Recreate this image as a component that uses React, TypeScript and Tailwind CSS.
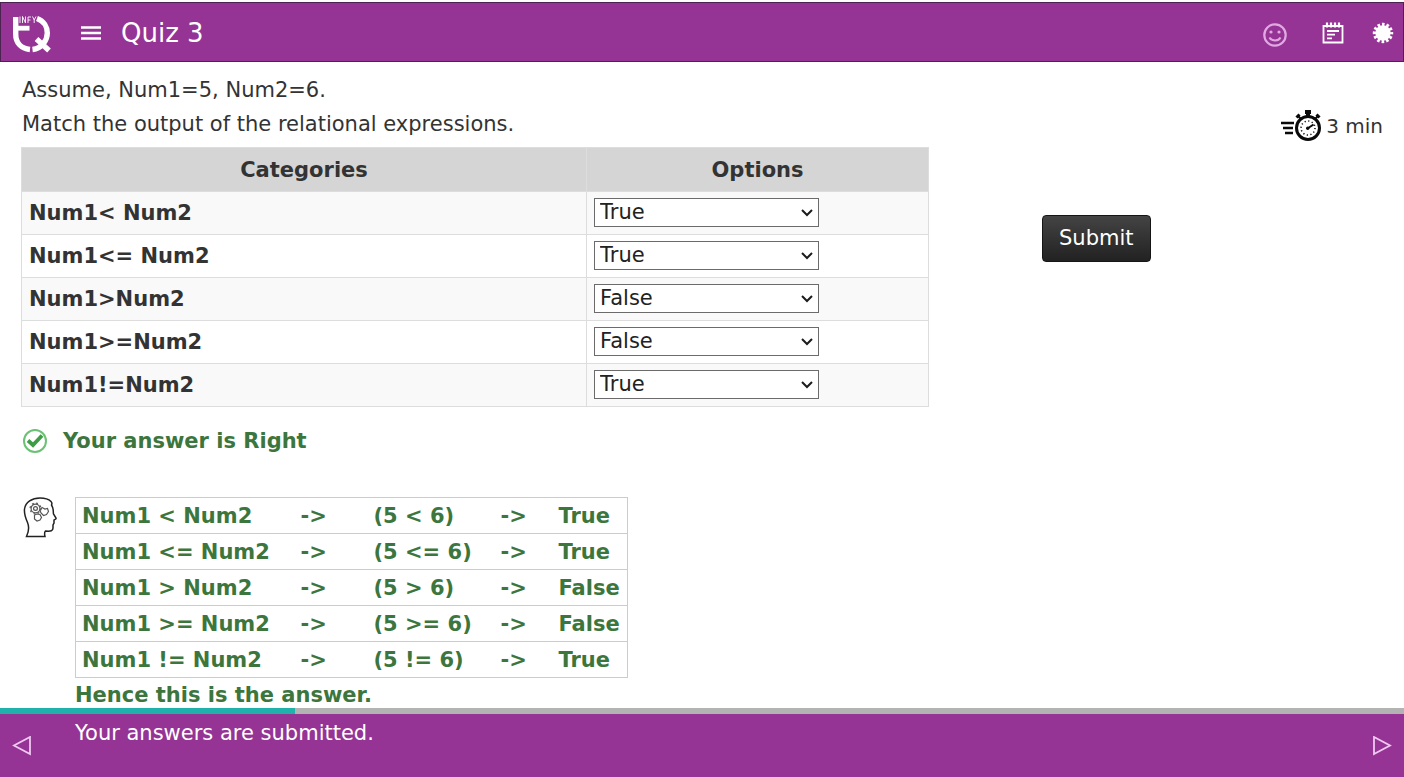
import { useState } from "react";

const rows = [
  { label: "Num1< Num2", value: "True" },
  { label: "Num1<= Num2", value: "True" },
  { label: "Num1>Num2", value: "False" },
  { label: "Num1>=Num2", value: "False" },
  { label: "Num1!=Num2", value: "True" },
];

const explanation = [
  ["Num1 < Num2", "(5 < 6)", "True"],
  ["Num1 <= Num2", "(5 <= 6)", "True"],
  ["Num1 > Num2", "(5 > 6)", "False"],
  ["Num1 >= Num2", "(5 >= 6)", "False"],
  ["Num1 != Num2", "(5 != 6)", "True"],
];

function Logo() {
  return (
    <svg width="40" height="42" viewBox="0 0 40 42" fill="none" stroke="#fff" aria-label="Infy TQ" role="img">
      <path d="M3.700 5V22C3.700 31 9 36.500 18 37.500" strokeWidth="5.400" />
      <path d="M1 16.200H17.500" strokeWidth="4.800" />
      <path d="M25 6.500C32 9 35.300 15 35.300 21C35.300 28 30 36.500 20.500 37.500" strokeWidth="5.400" />
      <path d="M24.500 27L37 38.500" strokeWidth="5.400" />
      <path d="M8 4.500V11M10.500 11V4.500L13.500 11V4.500M19 5H16V11M16 8H18.500M20.500 4.500L22.200 8L24 4.500M22.200 8V11" strokeWidth="0.900" />
    </svg>
  );
}

function MenuLines() {
  return (
    <svg width="20" height="14" viewBox="0 0 20 14" stroke="#fff" strokeWidth="2.400">
      <path d="M0 1.500H20M0 7H20M0 12.500H20" />
    </svg>
  );
}

function Smiley() {
  return (
    <svg width="26" height="26" viewBox="0 0 26 26" fill="none" stroke="#e2a8e4" strokeWidth="2.200">
      <circle cx="13" cy="13" r="10.700" />
      <path d="M7.500 15.500C9.500 19.500 16.500 19.500 18.500 15.500" strokeWidth="2" />
      <g fill="#e2a8e4" stroke="none">
        <circle cx="9" cy="10" r="1.600" />
        <circle cx="17" cy="10" r="1.600" />
      </g>
    </svg>
  );
}

function Notes() {
  return (
    <svg width="22" height="22" viewBox="0 0 22 22" fill="none" stroke="#fff" strokeWidth="1.800">
      <path d="M1.500 4H20.500V20.500H1.500Z" />
      <path d="M5 0.500V5.500M9 0.500V5.500M13 0.500V5.500M17 0.500V5.500" strokeWidth="2.200" />
      <path d="M5 9H17M5 12.700H13M5 16.400H10" />
    </svg>
  );
}

function Badge() {
  return (
    <svg width="22" height="22" viewBox="0 0 22 22">
      <circle cx="11" cy="11" r="7.700" fill="#fff" />
      <circle cx="11" cy="11" r="8.600" fill="none" stroke="#fff" strokeWidth="3.200" strokeDasharray="2.600 1.903" strokeDashoffset="1.300" />
    </svg>
  );
}

function Stopwatch() {
  return (
    <svg width="40" height="32" viewBox="0 0 40 32" fill="none" stroke="#0a0a0a">
      <circle cx="27" cy="18" r="11.500" strokeWidth="3" />
      <path d="M24 2H30M27 2V6" strokeWidth="4" />
      <path d="M15.500 7.500L18.500 4.500M35.500 4.500L38.500 7.500" strokeWidth="3" />
      <path d="M17 6L19.500 8.500M37 6L34.500 8.500" strokeWidth="2" />
      <circle cx="27" cy="18" r="7" strokeWidth="1.500" strokeDasharray="1.200 2.465" />
      <path d="M26.500 18.500L32.500 14.500" strokeWidth="2" />
      <circle cx="26.700" cy="18.300" r="1.700" fill="#0a0a0a" stroke="none" />
      <path d="M0 13H13M2 18H12M4 23H12" strokeWidth="2.400" />
    </svg>
  );
}

function RightMark() {
  return (
    <svg width="26" height="26" viewBox="0 0 26 26" fill="none">
      <circle cx="13" cy="13" r="11" stroke="#6cc174" strokeWidth="2" />
      <path d="M6 12.500L11 17L20 7.500" stroke="#3f9c46" strokeWidth="3.800" />
    </svg>
  );
}

function ThinkingHead() {
  return (
    <svg width="34" height="41" viewBox="0 0 34 41" fill="none" stroke="#222" strokeWidth="1.500">
      <path d="M3.500 39.500C6 34 6.500 30 4.500 25.500C2 20 1 17 1.500 12C2.500 5 9 1 17 1C22 1 26 2.500 28 4.500C29.500 6 29 7 28.500 8C31 12 30 15 30.500 17L33 21C33.500 22.500 31.500 22.500 31 23L31 26L30 28L30 31C30 34 28 34.500 22.500 34C21 35.500 21.500 37 22 39.500Z" />
      <g stroke="#555" strokeWidth="1.200">
        <circle cx="12.500" cy="11.500" r="4.400" />
        <circle cx="12.500" cy="11.500" r="5.400" strokeDasharray="1.800 2.441" />
        <circle cx="12.500" cy="11.500" r="1.900" />
        <path d="M19 10.500L22 12L24.500 11.500L25.500 14.500L23.500 17.500L20.500 18.500L18 16L17 13.500Z" />
        <path d="M11.500 18L14 17L17 17.500L18.500 20.500L17 23L14 24L11.500 22Z" />
      </g>
    </svg>
  );
}

export default function App() {
  const [answers, setAnswers] = useState(rows.map((r) => r.value));

  return (
    <div className="flex min-h-screen flex-col bg-white pt-[2px] font-['Verdana','DejaVu_Sans',sans-serif] text-[21px] text-[#333]">
      <header className="flex h-[60px] items-center border border-[#4b2350] bg-[#953494] pt-[2px] pr-[9px] pl-[11px] text-white">
        <Logo />
        <button type="button" aria-label="Menu" className="ml-[29px]">
          <MenuLines />
        </button>
        <h1 className="ml-5 text-[26px]">Quiz 3</h1>
        <div className="ml-auto flex items-center">
          <button type="button" aria-label="Feedback" className="mt-1">
            <Smiley />
          </button>
          <button type="button" aria-label="Notes" className="ml-[34px]">
            <Notes />
          </button>
          <button type="button" aria-label="Achievements" className="ml-7">
            <Badge />
          </button>
        </div>
      </header>

      <main className="flex flex-1 items-start px-[21px] pt-[11px]">
        <div className="w-2/3">
          <div className="pl-px leading-[34px]">
            <p>Assume, Num1=5, Num2=6.</p>
            <p>Match the output of the relational expressions.</p>
          </div>

          <table className="mt-[6px] w-full table-fixed border-collapse border border-[#ddd]">
            <thead>
              <tr className="h-11 bg-[#d5d5d5]">
                <th className="w-[62.3%] border border-[#ddd] pt-[2px]">Categories</th>
                <th className="border border-[#ddd] pt-[2px]">Options</th>
              </tr>
            </thead>
            <tbody>
              {rows.map((row, i) => (
                <tr key={row.label} className="h-[43px] odd:bg-[#f9f9f9]">
                  <th scope="row" className="border border-[#ddd] px-[7px] pt-[2px] text-left">
                    <label htmlFor={`answer-${i}`}>{row.label}</label>
                  </th>
                  <td className="border border-[#ddd] px-[7px] pb-px">
                    <div className="relative w-[225px]">
                      <select
                        id={`answer-${i}`}
                        value={answers[i]}
                        onChange={(e) => setAnswers(answers.map((a, j) => (j === i ? e.target.value : a)))}
                        className="block h-[29px] w-full appearance-none border border-[#6b6b6b] bg-white pl-[5px] leading-[27px] text-[#222]"
                      >
                        <option>True</option>
                        <option>False</option>
                      </select>
                      <svg
                        width="12"
                        height="8"
                        viewBox="0 0 12 8"
                        fill="none"
                        stroke="#1c1c1c"
                        strokeWidth="2"
                        className="pointer-events-none absolute top-[11px] right-[6px]"
                      >
                        <path d="M1 1L6 6L11 1" />
                      </svg>
                    </div>
                  </td>
                </tr>
              ))}
            </tbody>
          </table>

          <div className="mt-[17px] flex items-center gap-[15px] pl-px font-bold text-[#3c763d]">
            <RightMark />
            <p className="leading-[34px]">Your answer is Right</p>
          </div>

          <div className="mt-[39px] flex items-start gap-[18px] pl-[2px] font-bold text-[#3c763d]">
            <ThinkingHead />
            <div>
              <table className="w-[553px] table-fixed border-collapse border border-[#ccc]">
                <colgroup>
                  <col className="w-[225px]" />
                  <col className="w-[73px]" />
                  <col className="w-[127px]" />
                  <col className="w-[58px]" />
                  <col />
                </colgroup>
                <tbody>
                  {explanation.map(([expression, substituted, result]) => (
                    <tr key={expression} className="h-9 border border-[#ccc]">
                      <td className="pt-[2px] pl-[6px]">{expression}</td>
                      <td className="pt-[2px]">-&gt;</td>
                      <td className="pt-[2px]">{substituted}</td>
                      <td className="pt-[2px]">-&gt;</td>
                      <td className="pt-[2px]">{result}</td>
                    </tr>
                  ))}
                </tbody>
              </table>
              <p className="pt-1 leading-[26px]">Hence this is the answer.</p>
            </div>
          </div>
        </div>

        <aside className="flex-1">
          <div className="mt-[37px] flex items-center justify-end gap-[5px]">
            <Stopwatch />
            <span className="text-[20px]">3 min</span>
          </div>
          <button
            type="button"
            className="mt-[73px] ml-[113px] h-[47px] rounded border border-[#151515] bg-linear-to-b from-[#444] to-[#222] px-4 text-white"
          >
            Submit
          </button>
        </aside>
      </main>

      <footer className="text-white">
        <div className="h-[6px] bg-[#b3b3b3]">
          <div className="h-full w-[21%] bg-[#20b2aa]" />
        </div>
        <div className="flex h-[63px] items-center bg-[#953494] px-3">
          <button type="button" aria-label="Previous">
            <svg width="20" height="20" viewBox="0 0 20 20" fill="none" stroke="#f0c8f2" strokeWidth="1.800">
              <path d="M18 1V18L2 9.500Z" />
            </svg>
          </button>
          <p className="ml-[43px] self-start pt-1 leading-[30px]">Your answers are submitted.</p>
          <button type="button" aria-label="Next" className="ml-auto">
            <svg width="20" height="20" viewBox="0 0 20 20" fill="none" stroke="#f0c8f2" strokeWidth="1.800">
              <path d="M2 1V18L18 9.500Z" />
            </svg>
          </button>
        </div>
      </footer>
    </div>
  );
}
